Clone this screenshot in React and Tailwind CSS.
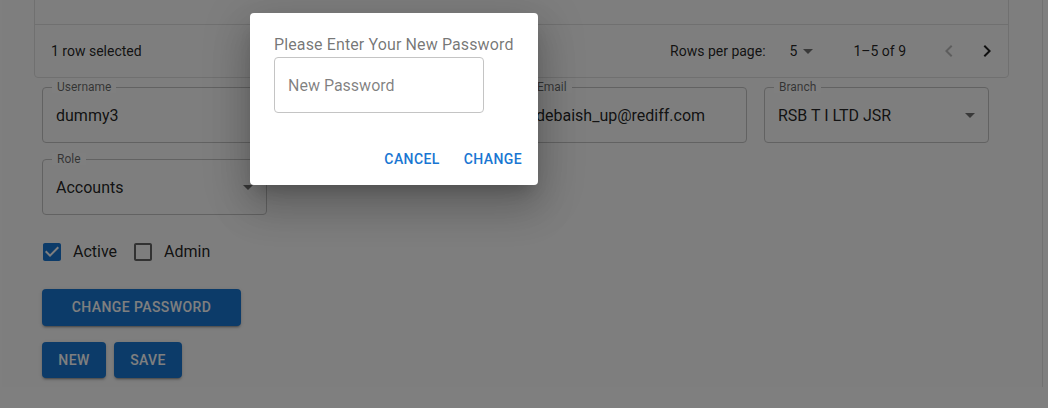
import React from 'react';

const ArrowDrop = ({ className = '' }) => (
    <svg viewBox="0 0 24 24" className={className} width="24" height="24">
        <path d="M7 10l5 5 5-5z" fill="currentColor" />
    </svg>
);

// campo "outlined" no estilo MUI
function OutlinedField({ label, value, select, className = '' }) {
    return (
        <div className={`relative h-[56px] w-[225px] rounded-[4px] border border-[#c4c4c4] ${className}`}>
            <span className="absolute -top-[7px] left-[9px] bg-white px-[5px] text-[12px] leading-[12px] text-black/60">
                {label}
            </span>
            <div className="flex h-full items-center pl-[13px] pt-[1px] text-[16px] text-black/87">{value}</div>
            {select && <ArrowDrop className="absolute right-[6px] top-[15px] text-black/55" />}
        </div>
    );
}

const CheckedBox = () => (
    <svg viewBox="0 0 24 24" width="24" height="24">
        <path
            fill="#1976d2"
            d="M19 3H5c-1.11 0-2 .9-2 2v14c0 1.1.89 2 2 2h14c1.11 0 2-.9 2-2V5c0-1.1-.89-2-2-2zm-9 14l-5-5 1.41-1.41L10 14.17l7.59-7.59L19 8l-9 9z"
        />
    </svg>
);

const EmptyBox = () => (
    <svg viewBox="0 0 24 24" width="24" height="24">
        <path
            fill="rgba(0,0,0,0.6)"
            d="M19 5v14H5V5h14m0-2H5c-1.1 0-2 .9-2 2v14c0 1.1.9 2 2 2h14c1.1 0 2-.9 2-2V5c0-1.1-.9-2-2-2z"
        />
    </svg>
);

const btnShadow = 'shadow-[0_3px_1px_-2px_rgba(0,0,0,0.2),0_2px_2px_0_rgba(0,0,0,0.14),0_1px_5px_0_rgba(0,0,0,0.12)]';

export default function App() {
    return (
        <div className="relative h-[408px] w-[1048px] overflow-hidden bg-white font-['Roboto',sans-serif]">
            <div className="ml-[2px] h-full w-[1041px] border-r border-[#e2e2e2] bg-[#fdfdfd]">
                {/* tabela (só o rodapé aparece) */}
                <div className="-mt-[21px] ml-[32px] w-[975px] rounded-[4px] border border-[#e0e0e0]">
                    <div className="h-[45px] border-b border-[#e0e0e0]" />
                    <div className="flex h-[52px] items-center pr-[9px] text-[14px] text-black/87">
                        <span className="pl-[16px]">1 row selected</span>
                        <div className="flex-1" />
                        <span>Rows per page:</span>
                        <span className="ml-[24px]">5</span>
                        <ArrowDrop className="-ml-[1px] text-black/55" />
                        <span className="ml-[33px]">1–5 of 9</span>
                        <svg viewBox="0 0 24 24" width="24" height="24" className="ml-[31px]">
                            <path fill="rgba(0,0,0,0.26)" d="M15.41 7.41 14 6l-6 6 6 6 1.41-1.41L10.83 12z" />
                        </svg>
                        <svg viewBox="0 0 24 24" width="24" height="24" className="ml-[14px]">
                            <path fill="rgba(0,0,0,0.87)" d="M10 6 8.59 7.41 13.17 12l-4.58 4.59L10 18l6-6z" />
                        </svg>
                    </div>
                </div>

                {/* formulário */}
                <div className="pl-[40px] pt-[9px]">
                    <div className="flex gap-[15px]">
                        <OutlinedField label="Username" value="dummy3" />
                        <OutlinedField label="Name" value="Debasish" />
                        <OutlinedField label="Email" value="debaish_up@rediff.com" />
                        <OutlinedField label="Branch" value="RSB T I LTD JSR" select className="ml-[2px]" />
                    </div>
                    <div className="mt-[16px]">
                        <OutlinedField label="Role" value="Accounts" select />
                    </div>

                    <div className="mt-[24px] flex h-[24px] items-center pt-[1px] text-[16px] text-black/87">
                        <div className="-ml-[2px]"><CheckedBox /></div>
                        <span className="ml-[9px]">Active</span>
                        <div className="ml-[14px]"><EmptyBox /></div>
                        <span className="ml-[9px]">Admin</span>
                    </div>

                    <button className={`mt-[26px] h-[37px] w-[199px] rounded-[4px] bg-[#1976d2] text-[14px] font-medium uppercase tracking-[0.4px] text-white ${btnShadow}`}>
                        Change Password
                    </button>
                    <div className="mt-[16px] flex gap-[8px]">
                        <button className={`h-[36px] w-[64px] rounded-[4px] bg-[#1976d2] text-[14px] font-medium uppercase tracking-[0.4px] text-white ${btnShadow}`}>
                            New
                        </button>
                        <button className={`h-[36px] w-[68px] rounded-[4px] bg-[#1976d2] text-[14px] font-medium uppercase tracking-[0.4px] text-white ${btnShadow}`}>
                            Save
                        </button>
                    </div>
                </div>
            </div>

            {/* fundo escurecido do diálogo */}
            <div className="absolute inset-0 bg-black/50" />

            {/* diálogo */}
            <div className="absolute left-[250px] top-[13px] w-[288px] rounded-[4px] bg-white shadow-[0_11px_15px_-7px_rgba(0,0,0,0.2),0_24px_38px_3px_rgba(0,0,0,0.14),0_9px_46px_8px_rgba(0,0,0,0.12)]">
                <div className="px-[24px] py-[20px]">
                    <p className="whitespace-nowrap text-[16px] leading-[24px] tracking-[0.12px] text-black/55">
                        Please Enter Your New Password
                    </p>
                    <input
                        type="password"
                        placeholder="New Password"
                        className="h-[56px] w-[210px] rounded-[4px] border border-[#c4c4c4] px-[13px] text-[16px] outline-none placeholder:text-black/50"
                    />
                </div>
                <div className="flex justify-end gap-[8px] p-[8px]">
                    <button className="h-[36px] min-w-[64px] px-[8px] text-[14px] font-medium uppercase tracking-[0.4px] text-[#1976d2]">
                        Cancel
                    </button>
                    <button className="h-[36px] min-w-[64px] px-[8px] text-[14px] font-medium uppercase tracking-[0.4px] text-[#1976d2]">
                        Change
                    </button>
                </div>
            </div>
        </div>
    );
}
